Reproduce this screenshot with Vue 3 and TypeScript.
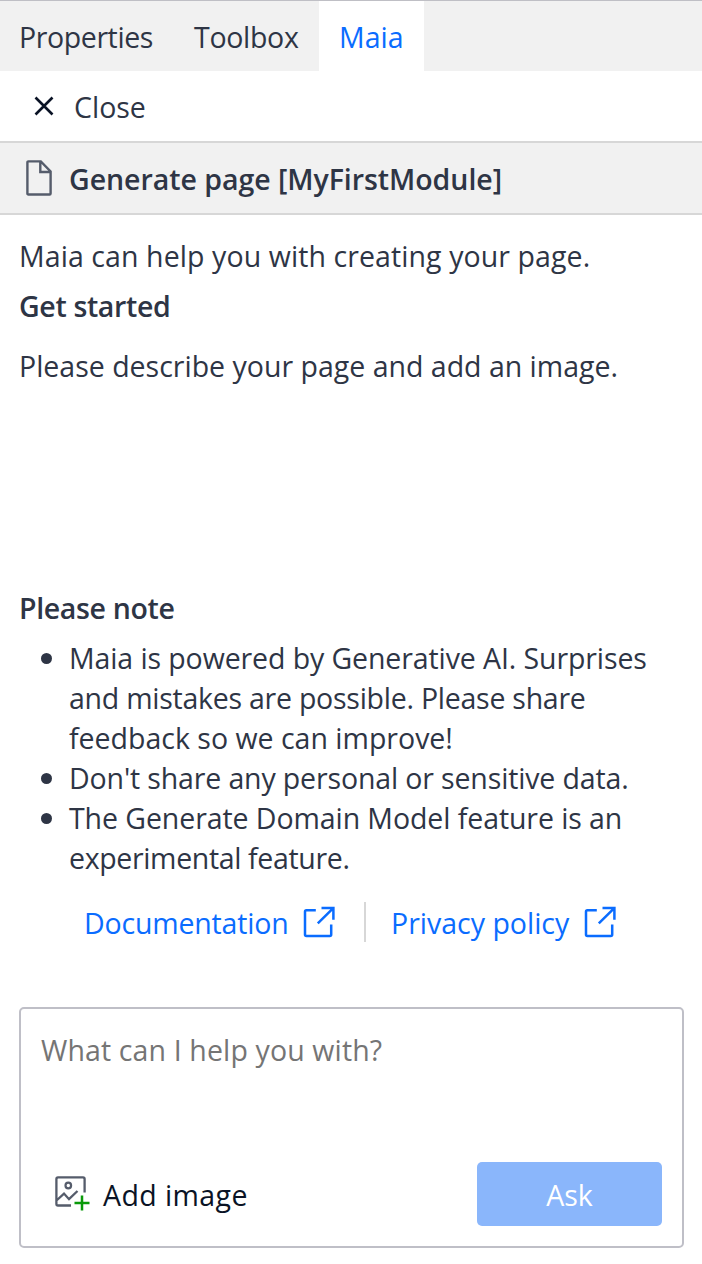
<script setup lang="ts">
interface Tab { label: string; name: string; active?: boolean }

const tabs: Tab[] = [
  { label: 'Properties', name: 'properties' },
  { label: 'Toolbox', name: 'toolbox' },
  { label: 'Maia', name: 'maia', active: true },
]

const notes: { text: string; name: string }[][] = [
  [
    { text: 'Maia is powered by Generative AI. Surprises', name: 'n1' },
    { text: 'and mistakes are possible. Please share', name: 'n2' },
    { text: 'feedback so we can improve!', name: 'n3' },
  ],
  [{ text: "Don't share any personal or sensitive data.", name: 'n4' }],
  [
    { text: 'The Generate Domain Model feature is an', name: 'n5' },
    { text: 'experimental feature.', name: 'n6' },
  ],
]

const links = [
  { label: 'Documentation', name: 'documentation' },
  { label: 'Privacy policy', name: 'privacy' },
]
</script>

<template>
  <main class="panel">
    <nav class="tabs">
      <div v-for="tab in tabs" :key="tab.name" class="tab" :class="[tab.name, { active: tab.active }]">
        <span>{{ tab.label }}</span>
      </div>
    </nav>

    <div class="close-row">
      <svg class="close-icon" width="20" height="20" viewBox="0 0 20 20">
        <path d="M1.5 1.5 18.5 18.5M18.5 1.5 1.5 18.5" fill="none" stroke="#0a1325" stroke-width="2.6" />
      </svg>
      <span class="close-label">Close</span>
    </div>

    <header class="title-bar">
      <svg class="page-icon" width="26" height="36" viewBox="0 0 26 36">
        <path d="M1.4 2.4Q1.4 1.4 2.4 1.4H14.8L24.6 11.5V33.5Q24.6 34.5 23.6 34.5H2.4Q1.4 34.5 1.4 33.5ZM14.3 1.5V12H24.5" fill="none" stroke="#555c6b" stroke-width="2.4" />
      </svg>
      <span class="title">Generate page [MyFirstModule]</span>
    </header>

    <section class="intro">
      <p class="help">Maia can help you with creating your page.</p>
      <h2 class="started">Get started</h2>
      <p class="describe">Please describe your page and add an image.</p>
    </section>

    <section class="note">
      <h2 class="note-title">Please note</h2>
      <ul>
        <li v-for="(item, i) in notes" :key="i">
          <span v-for="line in item" :key="line.name" class="line" :class="line.name">{{ line.text }}</span>
        </li>
      </ul>
    </section>

    <div class="links">
      <a v-for="link in links" :key="link.name" class="link" :class="link.name">
        <span class="link-label">{{ link.label }}</span>
        <svg width="32" height="32" viewBox="0 0 32 32">
          <path d="M12.8 4.3H3.4Q2 4.3 2 5.7V28.5Q2 29.9 3.4 29.9H26.8Q28.2 29.9 28.2 28.5V18.5M18.5 2H30.4V13.8M30 2.4 14.8 17.4" fill="none" stroke="#0a6cff" stroke-width="2.5" />
        </svg>
      </a>
    </div>

    <section class="prompt">
      <div class="placeholder"><span>What can I help you with?</span></div>
      <div class="actions">
        <div class="add">
          <svg width="36" height="36" viewBox="0 0 36 36">
            <path d="M16 29.5H3Q1.4 29.5 1.4 27.9V3Q1.4 1.4 3 1.4H28Q29.6 1.4 29.6 3V16.5M1.5 24.5 9 17.6 14 23.2 22.5 15" fill="none" stroke="#555c6b" stroke-width="2.3" />
            <circle cx="13.3" cy="9.5" r="2.8" fill="none" stroke="#555c6b" stroke-width="2.2" />
            <path d="M27 19.5V34.5M19.5 27H34.5" fill="none" stroke="#0a9a0a" stroke-width="2.5" />
          </svg>
          <span class="add-label">Add image</span>
        </div>
        <button class="ask"><span>Ask</span></button>
      </div>
    </section>
  </main>
</template>

<style>
body { background: #fff; }
</style>

<style scoped>
* { box-sizing: border-box; margin: 0; padding: 0; }
.panel {
  width: 702px; height: 1264px; overflow: hidden; background: #fff; color: #2e3545;
  font: 400 28.5px/40px "Open Sans", "Noto Sans", sans-serif; white-space: nowrap;
}
.tabs { display: flex; height: 71px; border-top: 1px solid #bfbfc5; background: #f1f1f1; }
.tab { padding: 16px 0 0 20px; }
.properties { width: 174px; padding-left: 19px; letter-spacing: -0.4px; }
.toolbox { width: 145px; letter-spacing: -0.3px; }
.maia { width: 105px; }
.tab.active { background: #fff; color: #0a6cff; }
.close-row { display: flex; align-items: flex-start; height: 70px; padding: 16px 0 0 34px; }
.close-icon { margin-top: 9px; }
.close-label { margin-left: 20px; }
.title-bar { display: flex; height: 74px; padding: 16px 0 0 26px; border: solid #d7d7d7; border-width: 2px 0; background: #f1f1f1; }
.page-icon { margin-top: 1px; }
.title { margin-left: 17px; font-weight: 600; letter-spacing: -0.04px; }
h2 { font-size: inherit; font-weight: 600; line-height: 40px; letter-spacing: -0.35px; }
.intro { height: 373px; padding: 21px 19px 0; }
.help { letter-spacing: 0.09px; }
.started { margin: 10px 0 20px; }
.note { padding-left: 19px; }
ul { margin-top: 10px; list-style: none; }
li { position: relative; padding-left: 50px; }
li::before { content: ""; position: absolute; left: 22px; top: 15px; width: 11px; height: 11px; border-radius: 50%; background: #2e3545; }
.line { display: block; }
.n1 { letter-spacing: -0.1px; }
.n2 { letter-spacing: -0.25px; }
.n4 { letter-spacing: -0.14px; }
.n5 { letter-spacing: -0.08px; }
.n6 { letter-spacing: -0.35px; }
.links { display: flex; height: 129px; padding: 24px 0 0 84px; color: #0a6cff; }
.link { display: flex; height: 40px; }
.link svg { margin-top: 4px; }
.link-label { padding-top: 1px; }
.documentation { width: 282px; border-right: 2px solid #d7d7d7; }
.documentation .link-label { width: 219px; letter-spacing: -0.18px; }
.privacy { padding-left: 25px; }
.privacy .link-label { width: 193px; }
.prompt { width: 665px; height: 241px; margin-left: 19px; border: 2px solid #bfbfc7; border-radius: 5px; }
.placeholder { height: 153px; padding: 21px 0 0 20px; color: #757575; letter-spacing: 0.13px; }
.actions { display: flex; justify-content: space-between; padding-right: 20px; }
.add { display: flex; padding: 13px 0 0 34px; color: #0a1325; }
.add svg { margin-top: 1px; }
.add-label { margin-left: 12px; letter-spacing: 0.4px; }
.ask { width: 185px; height: 64px; padding-top: 2px; border: 0; border-radius: 5px; background: #8ab6fb; color: #fff; font: inherit; }
</style>
